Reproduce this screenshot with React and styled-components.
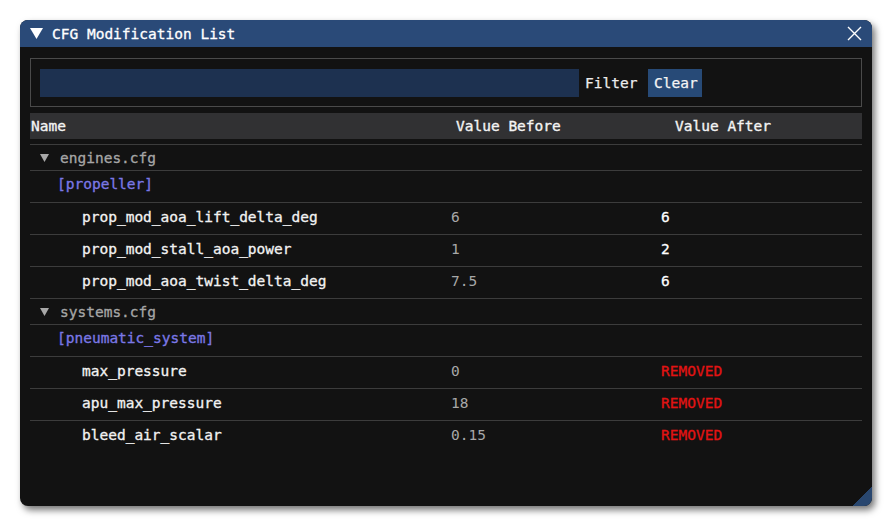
import React from 'react'
import styled, { createGlobalStyle } from 'styled-components'

const Global = createGlobalStyle`
body {
  margin: 0;
  background: #ffffff;
  font-family: 'DejaVu Sans Mono', 'Liberation Mono', monospace;
}`

const Page = styled.div`
padding: 20px 0 0 20px;
width: 892px;
height: 527px;
box-sizing: border-box;`

const Window = styled.div`
position: relative;
width: 852px;
height: 486px;
background: #121212;
border-radius: 8px;
overflow: hidden;
box-shadow: 3px 4px 7px rgba(0, 0, 0, 0.55);
display: flex;
flex-direction: column;
font-size: 14.5px;
color: #f2f2f2;`

const TitleBar = styled.div`
height: 27px;
flex: none;
background: #2a4a78;
display: flex;
align-items: center;
padding: 0 10px 0 10px;
gap: 9px;`

const TitleText = styled.div`
flex: 1;
color: #ffffff;
line-height: 27px;
padding-top: 1px;
-webkit-text-stroke: 0.3px #ffffff;`

const Content = styled.div`
padding: 11px 10px 0 10px;
display: flex;
flex-direction: column;`

const FilterFrame = styled.div`
height: 49px;
box-sizing: border-box;
border: 1px solid #4a4a4a;
display: flex;
align-items: center;
padding: 0 9px;`

const FilterInput = styled.div`
width: 539px;
height: 28px;
background: #1d3150;`

const FilterLabel = styled.div`
margin-left: 6px;
color: #ececec;
-webkit-text-stroke: 0.25px #ececec;`

const ClearButton = styled.button`
margin-left: 11px;
height: 28px;
width: 54px;
border: none;
padding: 0 0 0 1px;
background: #274a77;
color: #f4f4f4;
font-family: inherit;
font-size: 14.5px;
-webkit-text-stroke: 0.25px #f4f4f4;`

const Grid = `
display: grid;
grid-template-columns: 416px 210px 205px;
`

const HeaderRow = styled.div`
${Grid}
margin-top: 6px;
height: 26px;
background: #313133;
align-items: center;
margin-bottom: 5px;`

const HeaderCell = styled.div`
padding-left: ${p => p.$pad}px;
color: #f4f4f4;
-webkit-text-stroke: 0.35px #f4f4f4;`

const Rows = styled.div`
display: flex;
flex-direction: column;`

const Row = styled.div`
${Grid}
height: ${p => p.$h}px;
box-sizing: border-box;
border-top: 1px solid #3c3c3c;
align-items: center;`

const Cell = styled.div`
padding-left: ${p => p.$pad || 0}px;
padding-bottom: ${p => p.$pb || 0}px;
color: ${p => p.$color || '#f2f2f2'};
-webkit-text-stroke: ${p => (p.$stroke ? '0.3px currentColor' : '0')};
display: flex;
align-items: center;
gap: 11px;`

const Arrow = () => (
  <svg width="9" height="8" viewBox="0 0 9 8">
    <polygon points="0,0 9,0 4.5,8" fill="#a8a8a8" />
  </svg>
)

const Grip = styled.div`
position: absolute;
right: 0;
bottom: 0;
width: 20px;
height: 20px;
background: linear-gradient(135deg, transparent 50%, #29476f 50%);`

const files = [
  {
    name: 'engines.cfg',
    section: '[propeller]',
    items: [
      ['prop_mod_aoa_lift_delta_deg', '6', '6'],
      ['prop_mod_stall_aoa_power', '1', '2'],
      ['prop_mod_aoa_twist_delta_deg', '7.5', '6'],
    ],
  },
  {
    name: 'systems.cfg',
    section: '[pneumatic_system]',
    items: [
      ['max_pressure', '0', null],
      ['apu_max_pressure', '18', null],
      ['bleed_air_scalar', '0.15', null],
    ],
  },
]

export default function App() {
  return (
    <Page>
      <Global />
      <Window>
        <TitleBar>
          <svg width="13" height="11" viewBox="0 0 13 11">
            <polygon points="0,0 13,0 6.5,11" fill="#ffffff" />
          </svg>
          <TitleText>CFG Modification List</TitleText>
          <svg width="15" height="15" viewBox="0 0 15 15">
            <path d="M1 1 L14 14 M14 1 L1 14" stroke="#ffffff" strokeWidth="1.4" />
          </svg>
        </TitleBar>
        <Content>
          <FilterFrame>
            <FilterInput />
            <FilterLabel>Filter</FilterLabel>
            <ClearButton>Clear</ClearButton>
          </FilterFrame>
          <HeaderRow>
            <HeaderCell $pad={1}>Name</HeaderCell>
            <HeaderCell $pad={10}>Value Before</HeaderCell>
            <HeaderCell $pad={19}>Value After</HeaderCell>
          </HeaderRow>
          <Rows>
            {files.map(f => (
              <React.Fragment key={f.name}>
                <Row $h={26}>
                  <Cell $pad={10} $color="#a6a6a6" $stroke><Arrow />{f.name}</Cell>
                </Row>
                <Row $h={32}>
                  <Cell $pad={27} $pb={6} $color="#7b78e6" $stroke>{f.section}</Cell>
                </Row>
                {f.items.map(([n, b, a]) => (
                  <Row $h={32} key={n}>
                    <Cell $pad={52} $pb={3} $stroke>{n}</Cell>
                    <Cell $pad={5} $pb={3} $color="#a8a8a8">{b}</Cell>
                    {a === null
                      ? <Cell $pad={5} $pb={3} $color="#e31313" $stroke>REMOVED</Cell>
                      : <Cell $pad={5} $pb={3} $color="#ffffff" $stroke>{a}</Cell>}
                  </Row>
                ))}
              </React.Fragment>
            ))}
          </Rows>
        </Content>
        <Grip />
      </Window>
    </Page>
  )
}
